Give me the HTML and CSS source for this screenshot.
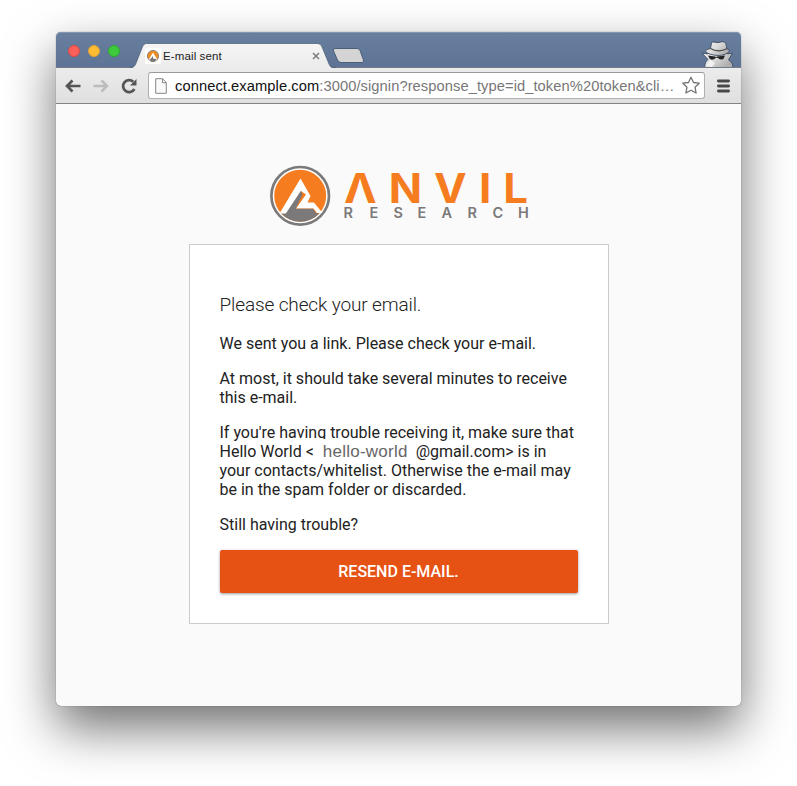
FILE: index.html
```html
<!DOCTYPE html>
<html lang="en">
<head>
<meta charset="utf-8">
<title>E-mail sent</title>
<link rel="stylesheet" href="styles.css">
</head>
<body>
<div class="window">
  <header class="titlebar">
    <div class="lights"><i class="light red"></i><i class="light yellow"></i><i class="light green"></i></div>
    <div class="tab">
      <svg class="tab-shape" width="207" height="26" viewBox="0 0 207 26"><defs><linearGradient id="tg" x2="0" y2="1"><stop stop-color="#f5f5f5"/><stop offset="1" stop-color="#ebebeb"/></linearGradient></defs><path d="M0 25.5C4 25 5 23 6.500 19L12 5C13.500 1.500 14.500.5 17 .5H187C190 .5 191 2 192 4L199 21C200.500 24.500 202 25.500 206 25.500V26H0Z" fill="url(#tg)"/><path d="M0 24.500C4 24 5 23 6.500 19L12 5C13.500 1.500 14.500.5 17 .5H187C190 .5 191 2 192 4L199 21C200.500 24.500 202 24.500 206 24.500" fill="none" stroke="#41566f" stroke-opacity=".65"/></svg>
      <svg class="favicon" width="16" height="16" viewBox="0 0 16 16"><path fill="#fff" d="M0 0h16v16H0z"/><circle cx="8" cy="8" r="5.600" fill="#f08a1c" stroke="#8b8b8b" stroke-width="1"/><path d="M4 11 8 4.500l4 6.500-1 2H5z" fill="#fff"/><path d="M4.500 12 8 8v2.500l3 .5.5 1C9 14 7 14 4.500 12Z" fill="#777"/></svg>
      <span class="tab-title">E-mail sent</span>
      <svg class="close" width="8" height="8" viewBox="0 0 8 8"><path d="m1 1 6 6M7 1 1 7" stroke="#7d7d7d" stroke-width="1.500"/></svg>
    </div>
    <svg class="newtab" width="33" height="17" viewBox="0 0 33 17"><path d="M3 1.500H25Q27 1.500 28 3.500L31.500 13Q32 15.500 30 15.500H9Q6.500 15.500 5.500 13L1.500 4Q1 1.500 3 1.500Z" fill="#d4d4d4" stroke="#4b5e78"/></svg>
    <svg class="spy" width="34" height="28" viewBox="0 0 34 28"><defs><linearGradient id="sg" x2="1" y2=".6"><stop stop-color="#f6f6f6"/><stop offset=".5" stop-color="#dcdcdc"/><stop offset="1" stop-color="#adadad"/></linearGradient></defs><g stroke="#3d4b60" stroke-width=".9" stroke-linejoin="round"><path d="M4.500 28.500C5 24 6 21.500 8 20.500L2 14 7.500 15 10 12H26L27.500 15 32.500 14 28.500 21C31.500 22.500 33 25 33 28.500Z" fill="url(#sg)"/><path d="M10.500 9.500 11.500 4Q12 2.500 14 3 18 4.300 22 2.700 25 2.300 25.800 4.500L27 9.800Q30 10.500 29.500 12 26 16.500 18 16.500 9 16 5.500 12.500 5 10.500 10.500 9.500Z" fill="url(#sg)"/></g><path d="M10.500 9.500Q18 14 27 9.800" fill="none" stroke="#444" stroke-width="1.200"/><path d="M8 16.500 15 17.500 16 18 17 17.500 25 16.500 23.500 20Q20.500 21.500 18 19L16 18.500 14.500 20Q11 21.500 9.500 19.500Z" fill="#222427"/><path d="M6 27 10 21 15 24 12 28Z" fill="#f2f2f2"/></svg>
  </header>
  <div class="toolbar">
    <svg class="nav" width="16" height="14" viewBox="0 0 16 14"><path d="M15.500 7H2M7.500 1.500 2 7l5.500 5.500" fill="none" stroke="#555" stroke-width="2.700"/></svg>
    <svg class="nav" width="16" height="14" viewBox="0 0 16 14"><path d="M.5 7H14M8.500 1.500 14 7l-5.500 5.500" fill="none" stroke="#bcbcbc" stroke-width="2.500"/></svg>
    <svg class="nav" width="16" height="16" viewBox="0 0 16 16"><path d="M13.400 11A6 6 0 1 1 12.300 3.800" fill="none" stroke="#555" stroke-width="2.700"/><path d="M15.500 1V7.500H9Z" fill="#555"/></svg>
    <div class="address">
      <svg class="page-icon" width="12" height="16" viewBox="0 0 12 16"><path d="M.7.700H7.500l3.800 3.800v10.800H.7ZM7.500.7v4h3.800" fill="#fafafa" stroke="#858585"/></svg>
      <span class="url"><b>connect.example.com</b>:3000/signin?response_type=id_token%20token&amp;cli…</span>
      <svg class="star" width="20" height="19" viewBox="0 0 20 19"><path d="m10 1.300 2.500 5.200 5.700.7-4.200 4 1.100 5.800-5.100-2.800-5.100 2.800 1.100-5.800-4.200-4 5.700-.7Z" fill="#fff" stroke="#737373" stroke-width="1.300" stroke-linejoin="round"/></svg>
    </div>
    <svg class="menu" width="13" height="14" viewBox="0 0 13 14"><path d="M1.400 2h10.200M1.400 7h10.200M1.400 12h10.200" stroke="#484848" stroke-width="2.800" stroke-linecap="round"/></svg>
  </div>
  <main class="content">
    <svg class="logo" width="262" height="64" viewBox="268 164 262 64" role="img" aria-label="Anvil Research">
      <circle cx="300.200" cy="195.800" r="28.800" fill="#fff" stroke="#7b7979" stroke-width="2.700"/>
      <circle cx="300.200" cy="195.800" r="26" fill="#f57c1f"/>
      <path d="M281 213.300A26 26 0 0 0 319.500 213.300Z" fill="#7b7979"/>
      <path d="M300.500 178.500 310.500 196 307.500 202.500H314L322.500 213H317L313.500 208.500H296L306 194.500 301 191 287 213.500H279.500Z" fill="#fff"/>
      <path d="M300.800 191 302.500 194.500 295.800 208.800H313L316.500 214H285.500Z" fill="#7b7979"/>
      <text class="brand" transform="translate(344 203) scale(1.080 1)" x="0 41.500 83.400 125 147.500">ΛNVIL</text>
      <text class="brand-sub" y="218" x="343.500 369.500 393.500 417.500 441.500 467.500 492.500 518">RESEARCH</text>
    </svg>
    <section class="card">
      <h1>Please check your email.</h1>
      <p>We sent you a link. Please check your e-mail.</p>
      <p>At most, it should take several minutes to receive<br>this e-mail.</p>
      <p>If you're having trouble receiving it, make sure that<br>Hello World &lt;<span class="mailbox">hello-world</span>@gmail.com&gt; is in<br>your contacts/whitelist. Otherwise the e-mail may<br>be in the spam folder or discarded.</p>
      <p>Still having trouble?</p>
      <button type="button">RESEND E-MAIL.</button>
    </section>
  </main>
</div>
</body>
</html>
```
FILE: styles.css
```css
* { box-sizing: border-box; }
body { margin: 0; height: 786px; padding: 32px 56px; background: #fff; overflow: hidden; }
svg { display: block; flex: none; }
.window {
  width: 685px; height: 674px; border-radius: 5px; background: #fafafa;
  display: flex; flex-direction: column;
  box-shadow: 0 0 1px rgba(0,0,0,.65), 0 22px 50px rgba(0,0,0,.56);
}
.titlebar {
  height: 36px; flex: none; display: flex; position: relative; padding-left: 12px;
  border-radius: 5px 5px 0 0; background: linear-gradient(#697f9f, #5d7496);
  border-bottom: 1px solid #737b87; box-shadow: inset 0 1px #8496af;
}
.lights { display: flex; gap: 8px; padding-top: 13px; width: 62px; }
.light { width: 12px; height: 12px; border-radius: 50%; border: 1px solid; }
.red { background: #fc605b; border-color: #df4744; }
.yellow { background: #fdbc34; border-color: #dea033; }
.green { background: #3fc93c; border-color: #2bad2d; }
.tab { position: relative; width: 207px; height: 26px; margin-top: 11px; display: flex; align-items: center; padding: 0 0 0 15px; }
.tab-shape { position: absolute; left: 0; top: 0; }
.favicon, .tab-title, .close { position: relative; }
.tab-title { width: 149px; padding-left: 2px; font: 11.5px/16px "Liberation Sans", sans-serif; letter-spacing: .12px; color: #222; }
.close { margin-left: 2px; }
.newtab { margin: 15px 0 0 -5px; }
.spy { margin: 7px 7px 0 auto; }
.toolbar {
  height: 36px; flex: none; display: flex; align-items: center; padding: 0 10px 0 9px;
  background: linear-gradient(#ececec, #dfdfdf); border-bottom: 1px solid #828282;
}
.nav { margin-right: 12px; }
.address {
  width: 557px; height: 27px; margin-left: -1px; display: flex; align-items: center; padding: 0 3px 0 6px;
  background: #fff; border: 1px solid #b0b0b0; border-top-color: #999; border-radius: 3px;
}
.url { flex: 1; padding-left: 8px; white-space: nowrap; font: 14.7px/20px "Liberation Sans", sans-serif; letter-spacing: .075px; color: #777; }
.url b { font-weight: 400; color: #111; }
.menu { margin-left: 12px; }
.content { flex: 1; display: flex; flex-direction: column; align-items: center; padding-top: 60px; }
.logo { margin-bottom: 16px; }
.brand { font: 700 40.500px Inter, sans-serif; fill: #f57c1f; }
.brand-sub { font: 600 14.500px Inter, sans-serif; fill: #7b7979; }
.card { width: 420px; height: 380px; padding: 48px 30px 30px; background: #fff; border: 1px solid #ccc; font: 16px/19px Roboto, sans-serif; color: #222; }
h1 { margin: 0 0 18px; font-size: 19px; line-height: 23px; font-weight: 300; letter-spacing: -.13px; }
p { margin: 0 0 16px; white-space: nowrap; }
.mailbox { display: inline-block; height: 19px; padding: 0 8px 0 9px; vertical-align: top; background: #fff; box-shadow: 0 -3px #fff; font: 17px/19px "Liberation Sans", sans-serif; letter-spacing: .24px; color: #666; }
button { display: block; width: 358px; height: 43px; border: 0; border-radius: 2px; background: #e65114; color: #fff; font: 500 16px Roboto, sans-serif; box-shadow: 0 1px 3px rgba(0,0,0,.4); }
```
